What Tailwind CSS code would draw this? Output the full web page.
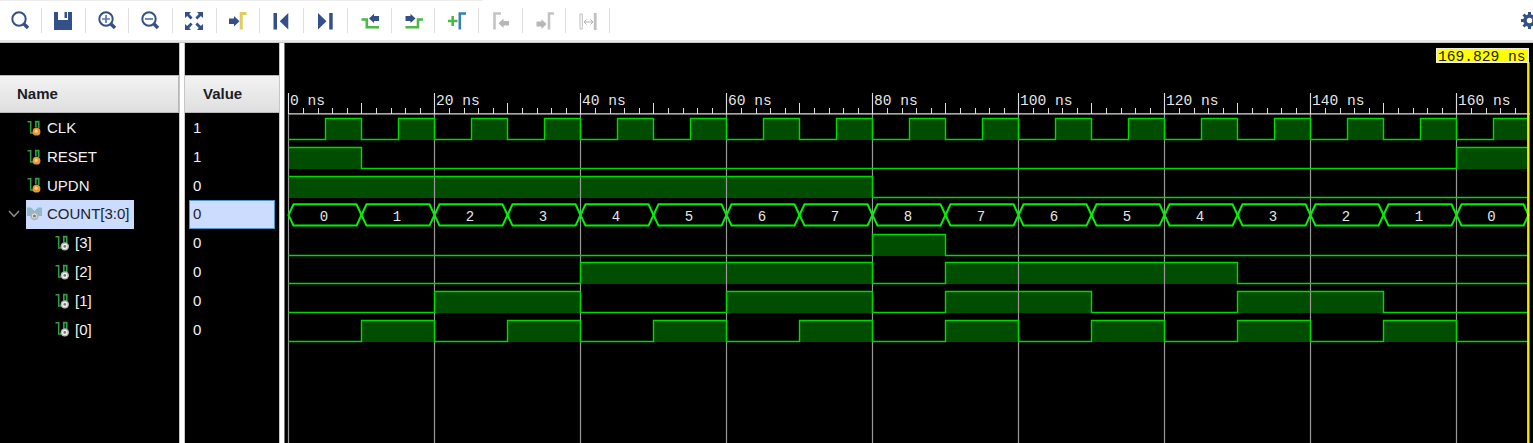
<!DOCTYPE html>
<html lang="en">
<head>
<meta charset="utf-8">
<title>Waveform</title>
<script src="https://cdn.jsdelivr.net/npm/@tailwindcss/browser@4"></script>
</head>
<body class="w-[1533px] h-[443px] overflow-hidden bg-black flex flex-col font-['Liberation_Sans',Arial,sans-serif] text-[15px]">
<svg class="hidden">
  <defs>
    <g id="sig" fill="none" stroke="#2f9e45"><path d="M.5 1.7H3.7V13H6.5" stroke-width="1.5"/><path d="M8.8 7.5V1.7H11.7V8" stroke-width="1.7"/></g>
    <g id="in"><use href="#sig"/><circle cx="9.5" cy="11.7" r="3.9" fill="#ee962e"/><circle cx="9.2" cy="11.2" r="1.6" fill="#ffd18c"/></g>
    <g id="bit"><use href="#sig"/><circle cx="9.8" cy="11.4" r="4.2" fill="#b9b9b9"/><circle cx="9.8" cy="11.4" r="2.6" fill="#f4f4f4"/><circle cx="9.8" cy="11.4" r="1.4" fill="#777"/></g>
    <g id="lens" fill="none" stroke="#335089"><circle cx="8" cy="8" r="6.7" stroke-width="2"/><path d="M13 13L17 17" stroke-width="3.4"/></g>
  </defs>
</svg>

<header class="h-[43px] shrink-0 bg-white flex flex-col overflow-hidden">
  <div class="w-[483px] h-px shrink-0 bg-[#ededed]"></div>
  <div class="flex items-center h-[25px] mt-[7px] w-[1542px] shrink-0">
    <div class="flex h-[25px]">
      <div class="w-[42px] pl-[11px] h-[25px] pt-[3px] border-r border-[#dedede]"><svg width="19" height="19"><use href="#lens"/></svg></div>
      <div class="w-[43.7px] pl-3 h-[25px] pt-[4px] border-r border-[#dedede]"><svg width="18" height="18"><path fill="#335089" d="M0 0H4V8H14V0H18V18H0ZM10.5 0H13V6H10.5Z"/></svg></div>
      <div class="w-[43.7px] pl-3 h-[25px] pt-[3px] border-r border-[#dedede]"><svg width="19" height="19"><use href="#lens"/><path d="M4 8H12M8 4V12" stroke="#5c78a8" stroke-width="1.7"/></svg></div>
      <div class="w-[43.7px] pl-3 h-[25px] pt-[3px] border-r border-[#dedede]"><svg width="19" height="19"><use href="#lens"/><path d="M4 8H12" stroke="#5c78a8" stroke-width="1.7"/></svg></div>
      <div class="w-[43.7px] pl-3 h-[25px] pt-[4px] border-r border-[#dedede]"><svg width="18" height="18" fill="#335089"><path id="ex" d="M0 0H6L4.2 2L7.6 5.4L5.6 7.4L2.2 4L0 6Z"/><use href="#ex" transform="matrix(-1 0 0 1 18 0)"/><use href="#ex" transform="matrix(1 0 0 -1 0 18)"/><use href="#ex" transform="rotate(180 9 9)"/></svg></div>
      <div class="w-[43.7px] pl-3 h-[25px] pt-[4px] border-r border-[#dedede]"><svg width="18" height="18"><path fill="#335089" d="M0 6.5H5V4L10.5 9.3L5 14.5V12H0Z"/><path d="M17.5 1.6H12.2V17.5" fill="none" stroke="#e3cb5e" stroke-width="3"/></svg></div>
      <div class="w-[43.7px] pl-[13px] h-[25px] pt-[4px] border-r border-[#dedede]"><svg width="18" height="18" fill="#335089"><path d="M.5 1H4V17.5H.5ZM15.3 1V17.5L6.8 9.2Z"/></svg></div>
      <div class="w-[43.7px] pl-[13px] h-[25px] pt-[4px] border-r border-[#dedede]"><svg width="18" height="18" fill="#335089"><path d="M1 1V17.5L9.5 9.2ZM12.2 1H15.7V17.5H12.2Z"/></svg></div>
      <div class="w-[43.7px] pl-[13px] h-[25px] pt-[4px] border-r border-[#dedede]"><svg width="19" height="18"><path d="M.5 7.5H5.8V15.3H18" fill="none" stroke="#4db748" stroke-width="2.6"/><path fill="#335089" d="M8 6.5L13 1.8V4H18V9H13V11Z"/></svg></div>
      <div class="w-[43.7px] pl-[13px] h-[25px] pt-[4px] border-r border-[#dedede]"><svg width="19" height="18"><path d="M.5 15.3H13V7.5H18" fill="none" stroke="#4db748" stroke-width="2.6"/><path fill="#335089" d="M10.5 6.5L5.5 1.8V4H.5V9H5.5V11Z"/></svg></div>
      <div class="w-[43.7px] pl-[13px] h-[25px] pt-[4px] border-r border-[#dedede]"><svg width="19" height="18" fill="none"><path d="M0 9H9.5M4.7 4V14" stroke="#4db748" stroke-width="2.6"/><path d="M18 1.5H11.8V17.5" stroke="#3580b5" stroke-width="2.6"/></svg></div>
      <div class="w-[43.7px] pl-[13px] h-[25px] pt-[4px] border-r border-[#dedede]"><svg width="19" height="18"><path d="M9 1.5H2.5V17.5" fill="none" stroke="#c4c4c4" stroke-width="2.6"/><path fill="#b7b7b7" d="M6.5 11.2L11.5 6.5V9H17V13.5H11.5V16Z"/></svg></div>
      <div class="w-[43.7px] pl-[13px] h-[25px] pt-[4px] border-r border-[#dedede]"><svg width="19" height="18"><path d="M18 1.5H13V17.5" fill="none" stroke="#c4c4c4" stroke-width="2.6"/><path fill="#b7b7b7" d="M10.5 12L5.5 7.2V9.5H.5V14.5H5.5V17Z"/></svg></div>
      <div class="w-[43.7px] pl-[13px] h-[25px] pt-[4px] border-r border-[#dedede]"><svg width="19" height="18" fill="none" stroke="#c0c0c0"><path d="M1 2H3.3V17H1Z"/><path d="M16.2 1V18" stroke-width="2.8"/><path d="M5 10H14M7.5 7.5L5 10L7.5 12.5M11.5 7.5L14 10L11.5 12.5" stroke="#b0b0b0"/></svg></div>
    </div>
    <svg class="ml-auto mr-[4px]" width="17" height="17" viewBox="-8.5 -8.5 17 17" fill="none" stroke="#335089"><circle r="4.5" stroke-width="3.6"/><path d="M0-8.5V-5M0 8.5V5M-8.5 0H-5M8.5 0H5M-6-6L-4-4M6-6L4-4M-6 6L-4 4M6 6L4 4" stroke-width="3"/></svg>
  </div>
  <div class="h-[3px] mt-auto shrink-0 bg-[#e6e6e6] border-b border-[#c9cbc9]"></div>
</header>

<main class="flex h-[400px] text-[#f2f2f2]">
  <section class="w-[180px] border-r border-[#c6c6c6] flex flex-col">
    <div class="h-[32px] shrink-0"></div>
    <div class="h-[38px] shrink-0 pl-[17px] pt-px flex items-center font-bold text-[#1c1c24] bg-linear-to-b from-[#f3f3f3] to-[#dfdfe1] border-t border-r border-b border-[#b8b8b8]">Name</div>
    <div id="names" class="flex flex-col pt-[0.5px]"></div>
  </section>
  <div class="w-[4px] bg-white"></div>
  <section class="w-[96px] border-x border-[#c6c6c6] flex flex-col">
    <div class="h-[32px] shrink-0"></div>
    <div class="h-[38px] shrink-0 pl-[18px] pt-px flex items-center font-bold text-[#1c1c24] bg-linear-to-b from-[#f3f3f3] to-[#dfdfe1] border-y border-[#b8b8b8]">Value</div>
    <div id="values" class="flex flex-col pt-[0.5px]"></div>
  </section>
  <div class="w-[4px] bg-white"></div>
  <div class="w-px bg-[#777]"></div>
  <svg id="wave" class="w-[1248px] h-[400px] shrink-0 font-['Liberation_Mono','Courier_New',monospace]" viewBox="285 43 1248 400" fill="none"></svg>
</main>

<script>
const rows = [['CLK',1],['RESET',1],['UPDN',0],['COUNT[3:0]',0],['[3]',0],['[2]',0],['[1]',0],['[0]',0]];
let n = '', v = '';
rows.forEach(([name, val], i) => {
  if (i === 3) {
    n += `<div class="h-[28.8px] flex items-center"><svg class="ml-[8px]" width="12" height="8"><path d="M1 1L6 6.3L11 1" fill="none" stroke="#8a8a8a" stroke-width="1.5"/></svg><div class="ml-[6px] h-[29px] w-[108px] bg-[#cbdcfe] text-[#22222c] flex items-center pl-px"><svg width="16" height="14"><path d="M0 .5H4L7.5 4L11 .5H15V9H10L7.5 6L5 9H0Z" fill="#8db9cb"/><circle cx="7.5" cy="9" r="4.2" fill="#b2b2b2"/><circle cx="7.5" cy="9" r="2.4" fill="#eee"/><circle cx="7.5" cy="9" r="1.5" fill="#777"/></svg><span class="ml-1">${name}</span></div></div>`;
    v += `<div class="h-[28.8px] flex items-center"><div class="ml-[4px] h-[29px] w-[86px] bg-[#cbdcfe] text-[#22222c] border border-[#4a94cc] flex items-center pl-[3px]">${val}</div></div>`;
  } else {
    n += `<div class="h-[28.8px] flex items-center pt-px ${i > 3 ? 'pl-[55px]' : 'pl-[27px]'}"><svg class="mb-px" width="15" height="16"><use href="#${i > 3 ? 'bit' : 'in'}"/></svg><span class="ml-[5px]">${name}</span></div>`;
    v += `<div class="h-[28.8px] flex items-center pt-px pl-[8px]">${val}</div>`;
  }
});
document.getElementById('names').innerHTML = n;
document.getElementById('values').innerHTML = v;

const X = t => Math.round(288.3 + t * 7.3) + 0.5, END = 169.83;
let fills = '', lines = '', grid = '';
for (let t = 0; t <= 160; t += 20) {
  grid += `<path d="M${X(t)} 93V443" stroke="#999" stroke-width="1.2"/><path d="M${X(t)} 93V114" stroke="#ddd"/><text x="${X(t) + 1.5}" y="105" font-size="14.6" fill="#e6e6e6">${t} ns</text>`;
}
for (let t = 2; t < 169; t += 2) if (t % 20) grid += `<path d="M${X(t)} ${t % 10 ? 108 : 103}V114" stroke="#ddd"/>`;
grid += `<path d="M289 113.8H1530" stroke="#ddd" stroke-width="1.3"/>`;
const clk = [];
for (let t = 5; t < 169; t += 10) clk.push([t, Math.min(t + 5, END)]);
const waves = [
  [0, clk], [1, [[0,10],[160,END]]], [2, [[0,80]]], [4, [[80,90]]],
  [5, [[40,80],[90,130]]], [6, [[20,40],[60,80],[90,110],[130,150]]],
  [7, [[10,20],[30,40],[50,60],[70,80],[90,100],[110,120],[130,140],[150,160]]]
];
for (const [r, high] of waves) {
  const top = Math.round(118.4 + r * 28.8) + 0.5, low = top + 21;
  let d = `M${X(0)} ${low}`;
  for (const [a, b] of high) {
    fills += `<rect x="${X(a)}" y="${top}" width="${X(b) - X(a)}" height="21.5" fill="#004d00"/>`;
    d += (a ? `H${X(a)}V${top}` : `M${X(0)} ${top}`) + `H${X(b)}` + (b < END ? `V${low}` : '');
  }
  if (high[high.length - 1][1] < END) d += `H${X(END)}`;
  lines += `<path d="${d}" stroke="#00d800" stroke-width="1.4"/>`;
}
[0,1,2,3,4,5,6,7,8,7,6,5,4,3,2,1,0].forEach((c, i) => {
  const a = X(i * 10), b = X(Math.min(i * 10 + 10, END));
  lines += `<path d="M${a} 215L${a + 5} 204.3H${b - 5}L${b} 215L${b - 5} 225.6H${a + 5}Z" stroke="#00f400" stroke-width="2"/><text x="${(a + b) / 2 - 1}" y="220.6" text-anchor="middle" font-size="14" fill="#e6e6e6">${c}</text>`;
});
const cursor = `<path d="M1528.3 62V443" stroke="#eeee00" stroke-width="2.4"/><rect x="1436.5" y="48.5" width="92" height="14" fill="#ffff00" stroke="#eeeedd"/><text x="1438" y="60.6" font-size="14.6" fill="#222200">169.829 ns</text>`;
document.getElementById('wave').innerHTML = fills + grid + lines + cursor;
</script>
</body>
</html>
